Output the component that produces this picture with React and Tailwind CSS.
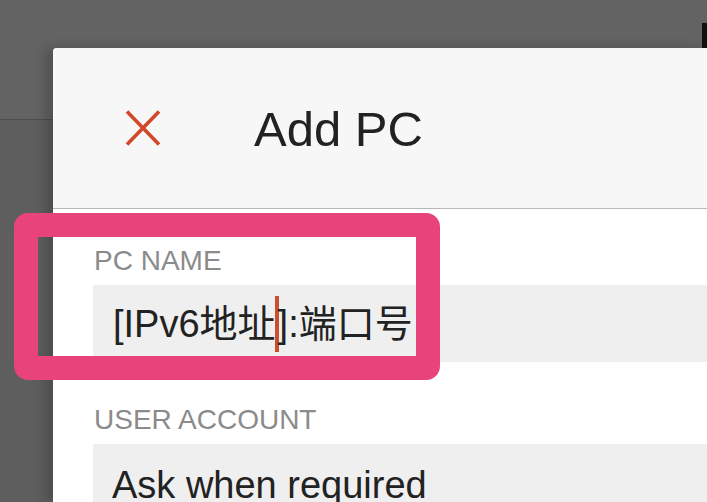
export default function App() {
  return (
    <div
      className="relative w-[707px] h-[502px] overflow-hidden bg-[#5e5e5e]"
      style={{ fontFamily: '"Liberation Sans", "Noto Sans CJK SC", sans-serif' }}
    >
      {/* background page (dimmed) */}
      <div className="h-[120px] bg-[#636363] border-b border-[#4e4e4e] flex justify-end">
        <div className="mt-[23px] w-[5px] h-[25px] bg-[#111]" />
      </div>

      {/* dialog */}
      <div className="absolute left-[53px] top-[48px] right-0 bottom-0 bg-white rounded-tl-[4px] shadow-[-8px_0_12px_rgba(0,0,0,0.18)] flex flex-col">
        <div className="h-[161px] shrink-0 bg-[#f7f7f7] border-b border-[#b8b8b8] rounded-tl-[4px] flex items-center pl-[72px]">
          <svg width="36" height="36" viewBox="0 0 36 36" className="shrink-0">
            <path d="M2 1.5 L34 34.5 M34 1.5 L2 34.5" stroke="#d2492a" strokeWidth="3.6" fill="none" />
          </svg>
          <div className="ml-[93px] text-[49px] leading-none text-[#222] mt-[2px]">Add PC</div>
        </div>

        <div className="flex flex-col pl-[40px] pt-[38px]">
          <div className="pl-[1px] text-[28px] leading-[28px] text-[#8b8b8b]">PC NAME</div>
          <div className="mt-[10px] h-[77px] bg-[#efefef] flex items-center pl-[20px]">
            <span className="text-[38px] leading-[38px] text-[#222] whitespace-nowrap">[IPv6地址</span>
            <span className="w-[4px] h-[56px] bg-[#c9502c] mx-[-1px] shrink-0" />
            <span className="text-[38px] leading-[38px] text-[#222] whitespace-nowrap">]:端口号</span>
          </div>

          <div className="mt-[44px] pl-[1px] text-[28px] leading-[28px] text-[#8b8b8b]">USER ACCOUNT</div>
          <div className="mt-[10px] h-[77px] bg-[#efefef] flex items-center pl-[19px]">
            <span className="text-[38px] leading-[38px] text-[#222] whitespace-nowrap mt-[4px]">Ask when required</span>
          </div>
        </div>
      </div>

      {/* pink highlight overlay */}
      <div className="absolute left-[14px] top-[213px] w-[426px] h-[167px] border-[24px] border-[#e9437b] rounded-[14px]" />
    </div>
  );
}
